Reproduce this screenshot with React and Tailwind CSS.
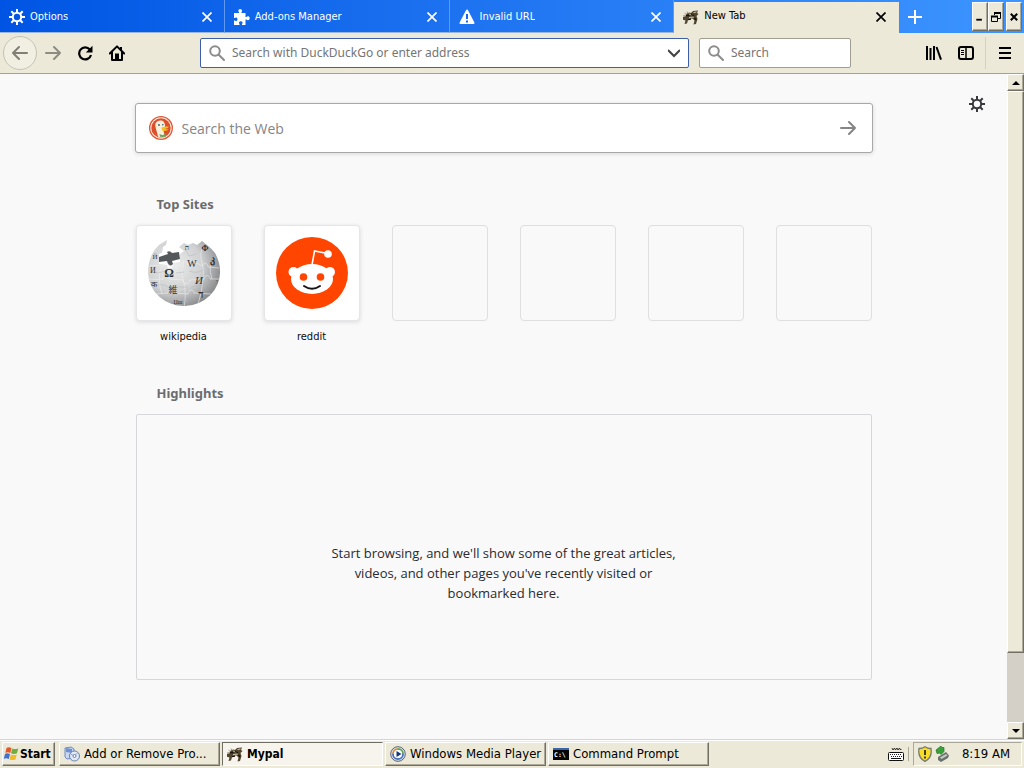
import { useState } from 'react';

const ui = "font-['DejaVu_Sans_Condensed','DejaVu_Sans',sans-serif]";
const raised = 'border border-t-white border-l-white border-r-[#716f64] border-b-[#716f64] bg-[#ece9d8] shadow-[inset_-1px_-1px_0_#aca899]';

const Gear = ({ className }) => (
  <svg viewBox="0 0 16 16" className={className} fill="none" stroke="currentColor" strokeWidth="2" aria-hidden="true">
    <circle cx="8" cy="8" r="4.200" />
    <path d="M8 0v4M8 12v4M0 8h4M12 8h4M2.3 2.3l2.9 2.9M10.8 10.8l2.9 2.9M2.3 13.7l2.9-2.9M10.8 5.2l2.9-2.9" />
  </svg>
);

const Puzzle = ({ className }) => (
  <svg viewBox="0 0 16 16" className={className} fill="currentColor" aria-hidden="true">
    <path d="M0 4h5V3C4 2.4 4 .3 6.2.3S8.400 2.400 7.500 3v1h4v4h1c.6-1 3.200-1 3.200 1.300s-2.600 2.200-3.200 1.200h-1V16H8v-1c1-.8.8-2.800-1.200-2.800S4.600 14.200 5.500 15v1H0v-4.500h.8c.8 1 2.700.6 2.700-1.200S1.600 8 .8 9H0z" />
  </svg>
);

const Warning = ({ className }) => (
  <svg viewBox="0 0 16 16" className={className} aria-hidden="true">
    <path d="M8 1.500L14.500 14h-13z" fill="currentColor" stroke="currentColor" strokeWidth="2" strokeLinejoin="round" />
    <path d="M8 5v5M8 11.500v2" stroke="#1668e8" strokeWidth="2" />
  </svg>
);

const Mypal = ({ className }) => (
  <svg viewBox="0 0 16 16" className={className} aria-hidden="true">
    <path d="M3 5q3-2.500 5-1l2-2 5-.5-1 2.500 1.500 1-2 2 1 3-1.500 5-2.500.5 1-4-2-2-4 0-1.500 5-2.500.5 1-3.500-3-1L0 8l3-1z" fill="#51452f" />
    <path d="M0 7l4-1M1.500 4l2 1.500M4 2.500l1 2" stroke="#a79d83" />
    <path d="M6 5l4 1M10.500 3.500l3-.5M6 8.500l5-.5" stroke="#d8cba6" />
    <path d="M3 6.500h3.500M8 5l3 2M5 10.500l3-.5M11.500 9l1.500 2" stroke="#17130d" strokeWidth="1.300" />
  </svg>
);

const Cross = ({ className }) => (
  <svg viewBox="0 0 10 10" className={className} stroke="currentColor" strokeWidth="1.700" aria-hidden="true">
    <path d="M.5.5l9 9M9.500.5l-9 9" />
  </svg>
);

const Arrow = ({ className }) => (
  <svg viewBox="0 0 16 16" className={className} fill="none" stroke="currentColor" strokeWidth="2" strokeLinecap="round" strokeLinejoin="round" aria-hidden="true">
    <path d="M1 8h14M9 2l6 6-6 6" />
  </svg>
);

const Reload = () => (
  <svg viewBox="0 0 16 16" className="size-4" fill="none" stroke="#000" strokeWidth="2.200" aria-hidden="true">
    <path d="M12.800 4.500A6 6 0 1 0 14 10" />
    <path d="M15.500.8v6.700H8.800z" fill="#000" stroke="none" />
  </svg>
);

const Home = () => (
  <svg viewBox="0 0 16 16" className="size-4" fill="none" stroke="#000" strokeWidth="2" aria-hidden="true">
    <path d="M.8 8.500L8 1.400l7.200 7.100" strokeLinecap="round" strokeLinejoin="round" />
    <path d="M3 7v8h10V7" strokeLinejoin="round" />
    <path d="M7 15V9.500h2V15M12 2v3" />
  </svg>
);

const Magnifier = () => (
  <svg viewBox="0 0 16 16" className="size-4 shrink-0 text-[#8c8c8c]" fill="none" stroke="currentColor" strokeWidth="2" strokeLinecap="round" aria-hidden="true">
    <circle cx="6" cy="6" r="4.800" />
    <path d="M9.700 9.700l5.300 5.300" />
  </svg>
);

const Library = () => (
  <svg viewBox="0 0 16 16" className="size-4" stroke="#000" strokeWidth="2" aria-hidden="true">
    <path d="M1 1v14M4.500 3v12M8 1v14" />
    <path d="M10.500 2l4.500 12.700" />
  </svg>
);

const Sidebar = () => (
  <svg viewBox="0 0 16 16" className="size-4" fill="none" stroke="#000" aria-hidden="true">
    <rect x="1" y="2" width="14" height="12" rx="2" strokeWidth="2" />
    <path d="M8 2v12" strokeWidth="1.500" />
    <path d="M3 5.500h3M3 7.500h3M3 9.500h3" />
  </svg>
);

const Duck = () => (
  <svg viewBox="0 0 24 24" className="size-6 shrink-0" aria-hidden="true">
    <circle cx="12" cy="12" r="12" fill="#dd5a35" />
    <circle cx="12" cy="12" r="10.700" fill="#fbe9e2" />
    <circle cx="12" cy="12" r="9.700" fill="#dd4f2a" />
    <path d="M9 20.500C8 15 5.500 10 6.500 7.500S10 4 12.500 4.500s4 3.500 3.500 7l-1.500 3.500 1.500 5.500q-4 1.800-7 0z" fill="#f7efd9" />
    <path d="M12.500 11.500q4-1.300 7.500-.8-1 2-4.500 2.300l4 .6q-2 2-6.500.8z" fill="#f5c021" />
    <path d="M10.500 18l3 1.300 3-1.800.5 3-3 .5-3-.2z" fill="#6da05a" />
    <circle cx="10" cy="9" r=".9" fill="#39597a" />
    <circle cx="13.800" cy="8.700" r=".8" fill="#39597a" />
  </svg>
);

const Wikipedia = () => (
  <svg viewBox="0 0 72 72" className="size-[72px]" aria-hidden="true">
    <defs>
      <radialGradient id="globe" cx=".35" cy=".38" r=".72">
        <stop offset="0" stopColor="#ececec" />
        <stop offset=".55" stopColor="#d0d1d2" />
        <stop offset="1" stopColor="#7f8183" />
      </radialGradient>
    </defs>
    <path d="M11 8l8-5-1 5-3 2-1 6-3 1 0 10 8 1 1 3 4 0 1-5 7-1 0-8 4-3-5-4 5-4 4 2 5-2 4 2 5-4 5 4q5 4 8 8 5 9 5 18A36 34 0 0 1 0 36Q0 18 11 8z" fill="url(#globe)" />
    <path d="M11 20l9-3-1-2q3-2 5 1l7-1 1 7-8 2 1 3q-3 3-5 0l-1-3-8 1z" fill="#55585a" />
    <g fill="none" stroke="#eeeeee" strokeWidth=".6">
      <path d="M2 29q8-2 13 1c1-5 6-5 7 0q7-3 11-1c0-5 6-6 7-1q8-4 14 1c2-4 6-3 6 1l11 1M1 42q7 1 14 0c0-5 6-5 6 0l14 1c0 5 6 5 7 0l14-1c1-5 6-4 6 0l9 0M8 57l12-1c1-5 6-4 6 0l14 1c0-5 6-5 6-1l17 1" />
      <path d="M13 30q-4 13 1 27M35 23c2 7-3 9 0 19q4 15 1 28M54 12c-4 10 3 14 1 30q-1 14-5 25M67 20q-8 8-3 22" />
    </g>
    <g fill="none" stroke="#b3b5b7" strokeWidth=".5">
      <path d="M3 35q8 2 13-1M28 36l8-1M41 34q8 3 14-1M7 49q8-3 13 1M29 50h11M43 50q8-3 15-1M20 64q8-3 20 0M38 13l3 6 8-2" />
    </g>
    <g fill="#303234" fontFamily="Liberation Serif, serif" textAnchor="middle">
      <text x="21" y="40" fontSize="12" fontWeight="bold">Ω</text>
      <text x="44" y="30" fontSize="10">W</text>
      <text x="51" y="47" fontSize="11" fontStyle="italic">И</text>
      <text x="25" y="56" fontSize="9" fontFamily="Noto Sans CJK JP, sans-serif">維</text>
      <text x="53" y="61" fontSize="11" fontWeight="bold">ד</text>
      <text x="64" y="26" fontSize="10" fontWeight="bold">კ</text>
      <text x="57" y="14" fontSize="8" fontWeight="bold">Ф</text>
      <text x="39" y="13" fontSize="7">ת</text>
      <text x="5" y="36" fontSize="8">И</text>
      <text x="6" y="50" fontSize="8">क</text>
      <text x="30" y="67" fontSize="6">Џш</text>
      <text x="7" y="22" fontSize="7">Й</text>
      <text x="69" y="46" fontSize="6">ו</text>
    </g>
  </svg>
);

const Reddit = () => (
  <svg viewBox="0 0 72 72" className="size-[72px]" aria-hidden="true">
    <circle cx="36" cy="36" r="36" fill="#ff4500" />
    <path d="M36 28l2.500-14 13 2.500" fill="none" stroke="#fff" strokeWidth="1.600" />
    <g fill="#fff">
      <circle cx="52" cy="17" r="3.800" />
      <circle cx="17.500" cy="35" r="5" />
      <circle cx="54" cy="35" r="5" />
      <ellipse cx="36" cy="42" rx="21" ry="15" />
    </g>
    <circle cx="27.500" cy="40" r="3.800" fill="#ff4500" />
    <circle cx="44.500" cy="40" r="3.800" fill="#ff4500" />
    <path d="M28 49q8 5.500 16 0" fill="none" stroke="#151515" strokeWidth="2" strokeLinecap="round" />
  </svg>
);

const WindowsFlag = () => (
  <svg viewBox="0 0 16 16" className="size-4 shrink-0" aria-hidden="true">
    <path d="M3.500 2q2-1.500 5 0L7.300 7q-3-1.300-5 0z" fill="#e4582b" />
    <path d="M9.300 2.500q3 1.300 6-.3L14 7.300q-3 1.400-6 0z" fill="#70ad3d" />
    <path d="M2 8q2-1.500 5 0l-1.200 5q-3-1.300-5 0z" fill="#4070d0" />
    <path d="M7.800 8.400q3 1.400 6 0l-1.300 5q-3 1.400-6 0z" fill="#f0bd27" />
  </svg>
);

const Programs = () => (
  <svg viewBox="0 0 16 16" className="size-4 shrink-0" aria-hidden="true">
    <path d="M1 2l6-1 3 2v9l-7 1-2-2z" fill="#c9d9f4" stroke="#7189ba" />
    <path d="M2 2l6 1v4L2 6z" fill="#6f91ce" />
    <circle cx="10.500" cy="10" r="5" fill="#e3e9f3" stroke="#6580b1" />
    <path d="M6.500 8l4 2 3-3" stroke="#9aaccd" fill="none" />
    <circle cx="10.500" cy="10" r="1.500" fill="#fff" stroke="#6580b1" />
  </svg>
);

const MediaPlayer = () => (
  <svg viewBox="0 0 16 16" className="size-4 shrink-0" aria-hidden="true">
    <circle cx="8" cy="8" r="7.300" fill="#dfe7ef" stroke="#59616e" />
    <path d="M3 8a5 5 0 0 1 5-5" fill="none" stroke="#e38a38" strokeWidth="2" />
    <path d="M8 3a5 5 0 0 1 5 5" fill="none" stroke="#61a454" strokeWidth="2" />
    <path d="M13 8A5 5 0 0 1 3 8" fill="none" stroke="#4d75be" strokeWidth="2" />
    <circle cx="8" cy="8" r="4" fill="#fff" />
    <path d="M6.500 5l5 3-5 3z" fill="#143877" />
  </svg>
);

const Prompt = () => (
  <svg viewBox="0 0 16 16" className="size-4 shrink-0" aria-hidden="true">
    <path d="M0 2h16v12H0z" fill="#050505" />
    <path d="M0 2h16v2H0z" fill="#3966ad" />
    <text x="1" y="11" fontSize="6.500" fontWeight="bold" fontFamily="DejaVu Sans Mono, monospace" fill="#fff">C:\</text>
  </svg>
);

const Keyboard = () => (
  <svg viewBox="0 0 16 14" className="h-[14px] w-4" aria-hidden="true">
    <path d="M4 1l1 2 1.500-2 1 2L9 1l1 2 1.500-2 1 2 1-1" fill="none" stroke="#222" strokeWidth=".9" />
    <rect x=".5" y="5.500" width="15" height="8" rx="1" fill="#fff" stroke="#111" />
    <path d="M2 7.500h12M3 9.500h11" stroke="#222" strokeDasharray="1 1" />
    <path d="M3 11.500h10" stroke="#111" />
  </svg>
);

const Shield = () => (
  <svg viewBox="0 0 16 16" className="size-4" aria-hidden="true">
    <path d="M8 .7q3 2 6 1.800 1.500 9-6 12.800Q.5 11.500 2 2.500 5 2.700 8 .7z" fill="#f7dc28" stroke="#777a70" strokeWidth="1.300" />
    <path d="M8 4v5M8 10.500v2" stroke="#222" strokeWidth="1.700" />
  </svg>
);

const Unplug = () => (
  <svg viewBox="0 0 16 16" className="size-4" aria-hidden="true">
    <path d="M3 11l8-5 3 3.500-1 2.500-7 4-3-2z" fill="#6a706b" />
    <path d="M5 11.500l6-3.500 1.500 1.500-6 3.500z" fill="#c3cbc4" />
    <path d="M1 4l5-4 1 1.500 2 0v4l-3 3-1.500-1.500L2 7.500z" fill="#39a13a" stroke="#257428" strokeWidth=".7" />
  </svg>
);

const tabs = [
  { title: 'Options', icon: Gear },
  { title: 'Add-ons Manager', icon: Puzzle },
  { title: 'Invalid URL', icon: Warning },
  { title: 'New Tab', icon: Mypal },
];

const TabBar = () => {
  const [active, setActive] = useState(3);

  return (
    <div className="flex h-[33px] bg-linear-to-r from-[#0054e3] to-[#3d95ff]">
      <div role="tablist" className="flex min-w-0 flex-1">
        {tabs.map(({ title, icon: Icon }, i) => (
          <div
            key={title}
            className={`flex min-w-0 flex-1 items-center border-r pr-[11px] pl-[9px] ${i === active ? 'mt-[2px] border-[#ece9d8] bg-[#ece9d8] pb-[2px] text-black' : 'border-b border-r-[#5f9aef] border-b-[#9db7da] pt-[2px] text-white'}`}
          >
            <button role="tab" aria-selected={i === active} onClick={() => setActive(i)} className="flex min-w-0 flex-1 items-center gap-[5px] text-left">
              <Icon className="size-4 shrink-0" />
              <span className="truncate text-[11px]">{title}</span>
            </button>
            <button aria-label={`Close ${title}`} className="p-px"><Cross className="size-[10px]" /></button>
          </div>
        ))}
      </div>
      <div className="flex w-[125px] justify-between pr-[2px] pl-[9px]">
        <button aria-label="New tab" className="text-white">
          <svg viewBox="0 0 14 14" className="size-[14px]" stroke="currentColor" strokeWidth="2"><path d="M7 0v14M0 7h14" /></svg>
        </button>
        <div className="flex h-[31px] pt-[2px]">
          <button aria-label="Minimize" className={`flex w-4 justify-center ${raised}`}>
            <svg viewBox="0 0 12 28" className="h-[26px] w-3"><path d="M2 18h6" stroke="#000" strokeWidth="2" /></svg>
          </button>
          <button aria-label="Restore" className={`flex w-4 items-center justify-center ${raised}`}>
            <svg viewBox="0 0 10 10" className="size-[10px]" fill="none" stroke="#000"><path d="M3.500 3V.5h6v6H7M.5 4.500h6v5h-6z" /><path d="M3 1h7M0 4.500h7" strokeWidth="2" /></svg>
          </button>
          <button aria-label="Close" className={`ml-[2px] flex w-4 items-center justify-center ${raised}`}>
            <svg viewBox="0 0 10 10" className="size-2" stroke="#000" strokeWidth="2.500"><path d="M1 1l8 8M9 1L1 9" /></svg>
          </button>
        </div>
      </div>
    </div>
  );
};

const NavBar = () => (
  <div className="flex h-[41px] items-center border-b border-[#a3a193] bg-[#ece9d8] pr-3 pl-[3px]">
    <button aria-label="Back" className="flex size-[34px] items-center justify-center rounded-full border border-[#c5c3b5] bg-[#f1efe2] text-[#807e76]">
      <Arrow className="size-4 rotate-180" />
    </button>
    <button aria-label="Forward" className="flex w-8 justify-center text-[#8d8b82]"><Arrow className="size-4" /></button>
    <button aria-label="Reload" className="flex w-8 justify-center"><Reload /></button>
    <button aria-label="Home" className="flex w-8 justify-center"><Home /></button>
    <label className="ml-[67px] flex h-[30px] min-w-0 flex-1 items-center gap-[7px] rounded-xs border border-[#3e5ea9] bg-white px-2">
      <Magnifier />
      <input aria-label="Address" className="min-w-0 flex-1 font-['Noto_Sans',sans-serif] text-[12px] outline-none placeholder:text-[#757575]" placeholder="Search with DuckDuckGo or enter address" />
      <button aria-label="Show history">
        <svg viewBox="0 0 12 12" className="size-3" fill="none" stroke="#444" strokeWidth="2"><path d="M0 3l6 6 6-6" /></svg>
      </button>
    </label>
    <label className="ml-[10px] flex h-[30px] w-[152px] items-center gap-[7px] rounded-xs border border-[#a09e93] bg-white px-2">
      <Magnifier />
      <input aria-label="Search" className="min-w-0 flex-1 font-['Noto_Sans',sans-serif] text-[12px] outline-none placeholder:text-[#757575]" placeholder="Search" />
    </label>
    <div className="ml-[67px] flex items-center">
      <button aria-label="Library" className="flex w-8 justify-center"><Library /></button>
      <button aria-label="Sidebars" className="flex w-8 justify-center"><Sidebar /></button>
      <button aria-label="Open menu" className="ml-[3px] flex h-8 items-center border-l border-[#d5d2c2] pl-3">
        <svg viewBox="0 0 14 14" className="size-[14px]" stroke="#000" strokeWidth="2"><path d="M1 2h12M1 7h12M1 12h12" /></svg>
      </button>
    </div>
  </div>
);

const sites = [
  { title: 'wikipedia', icon: Wikipedia },
  { title: 'reddit', icon: Reddit },
];

const NewTab = () => (
  <main className="relative min-w-0 flex-1 overflow-hidden bg-[#f9f9fa] pt-[29px] font-['Open_Sans',sans-serif]">
    <button aria-label="Customize your New Tab page" className="absolute top-[22px] right-[22px] text-[#38383d]"><Gear className="size-4" /></button>
    <div className="mx-auto w-full max-w-[738px]">
      <form className="flex h-[50px] items-center rounded-[3px] border border-[#a8a8a8] bg-white pr-4 pl-[13px] shadow-[0_1px_4px_#0c0c0d22]">
        <Duck />
        <input aria-label="Search the Web" className="min-w-0 flex-1 px-[9px] text-[14px] outline-none placeholder:text-[#858585]" placeholder="Search the Web" />
        <button type="button" aria-label="Submit search" className="text-[#858585]"><Arrow className="size-4" /></button>
      </form>
      <section className="mt-[41px] px-px">
        <h2 className="pl-[21px] font-['Noto_Sans',sans-serif] text-[13px] leading-5 font-bold text-[#6c6c6e]">Top Sites</h2>
        <ul className="mt-[11px] grid grid-cols-6 gap-8">
          {sites.map(({ title, icon: Icon }) => (
            <li key={title}>
              <a href={`#${title}`} className="block text-center text-[11px] text-[#0c0c0d]">
                <span className="flex h-24 items-center justify-center rounded-sm border border-[#e6e6e8] bg-white shadow-[0_1px_4px_#0c0c0d22]"><Icon /></span>
                <span className={`mt-2 block leading-4 ${ui}`}>{title}</span>
              </a>
            </li>
          ))}
          {[0, 1, 2, 3].map((n) => (
            <li key={n} className="h-24 rounded-sm border border-[#dfdfe0]" />
          ))}
        </ul>
      </section>
      <section className="mt-[38px] px-px">
        <h2 className="pl-[21px] font-['Noto_Sans',sans-serif] text-[13px] leading-5 font-bold text-[#6c6c6e]">Highlights</h2>
        <div className="mt-[11px] flex h-[266px] justify-center rounded-xs border border-[#d7d7db] pt-32">
          <p className="w-[350px] text-center text-[13px] leading-5 text-[#2a2a2e]">
            Start browsing, and we'll show some of the great articles, videos, and other pages you've recently visited or<br />bookmarked here.
          </p>
        </div>
      </section>
    </div>
  </main>
);

const ScrollBar = () => (
  <div className="flex w-[17px] flex-col bg-[#d4d0c8]">
    <button aria-label="Scroll up" className={`flex h-[17px] items-center justify-center ${raised}`}>
      <svg viewBox="0 0 8 4" className="h-1 w-2"><path d="M4 0l4 4H0z" /></svg>
    </button>
    <div className="flex-1">
      <div className={`h-[89%] ${raised}`} />
    </div>
    <button aria-label="Scroll down" className={`flex h-[17px] items-center justify-center ${raised}`}>
      <svg viewBox="0 0 8 4" className="h-1 w-2"><path d="M0 0h8L4 4z" /></svg>
    </button>
  </div>
);

const tasks = [
  { title: 'Add or Remove Pro...', icon: Programs },
  { title: 'Mypal', icon: Mypal, active: true },
  { title: 'Windows Media Player', icon: MediaPlayer },
  { title: 'Command Prompt', icon: Prompt },
];

const TaskBar = () => (
  <footer className="flex h-[29px] items-center border-t border-[#d9d6c6] bg-[#ece9d8] px-[2px] text-[13px] shadow-[inset_0_1px_0_#fff]">
    <button className={`flex h-6 w-[53px] items-center gap-px text-[12px] font-bold ${raised}`}>
      <WindowsFlag />
      Start
    </button>
    <div className="ml-1 flex min-w-0 flex-1 gap-[2px]">
      {tasks.map(({ title, icon: Icon, active }) => (
        <button
          key={title}
          className={`flex h-6 w-[161px] min-w-0 items-center gap-1 px-1 ${active ? 'border border-t-[#716f64] border-r-white border-b-white border-l-[#716f64] bg-[#f6f4ec] text-[12px] font-bold' : raised}`}
        >
          <Icon className="size-4 shrink-0" />
          <span className="whitespace-nowrap">{title}</span>
        </button>
      ))}
    </div>
    <div className="flex items-center">
      <button aria-label="Keyboard" className="mr-1 border-r border-[#aca899] pr-1"><Keyboard /></button>
      <div className="flex h-6 items-center gap-[2px] border border-t-[#aca899] border-r-white border-b-white border-l-[#aca899] pr-[11px] pl-[3px]">
        <Shield />
        <Unplug />
        <time className="ml-[9px]">8:19 AM</time>
      </div>
    </div>
  </footer>
);

const App = () => (
  <div className={`flex h-screen flex-col overflow-hidden text-black ${ui}`}>
    <TabBar />
    <NavBar />
    <div className="flex min-h-0 flex-1">
      <NewTab />
      <ScrollBar />
    </div>
    <TaskBar />
  </div>
);

export default App;
